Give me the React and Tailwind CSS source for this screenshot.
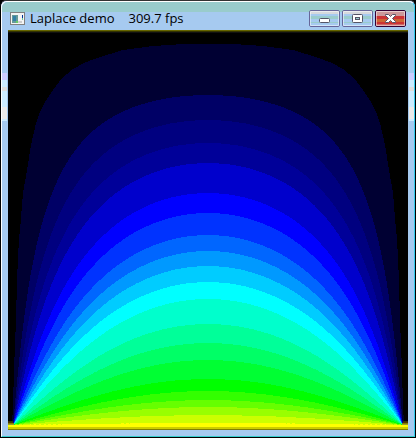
import React from "react";

// y at the middle column where each colour band begins
const bands = [
  { y: 65, color: "#000066" },
  { y: 90, color: "#000080" },
  { y: 113, color: "#000099" },
  { y: 133, color: "#0000cc" },
  { y: 163, color: "#0000ff" },
  { y: 183, color: "#0033ff" },
  { y: 205, color: "#0066ff" },
  { y: 221, color: "#0099ff" },
  { y: 236, color: "#00ccff" },
  { y: 252, color: "#00ffff" },
  { y: 269, color: "#00ffcc" },
  { y: 294, color: "#00ff99" },
  { y: 313, color: "#00ff66" },
  { y: 330, color: "#00ff33" },
  { y: 349, color: "#00ff00" },
  { y: 361, color: "#33ff00" },
  { y: 370, color: "#66ff00" },
  { y: 377, color: "#99ff00" },
  { y: 385, color: "#ccff00" },
  { y: 393, color: "#ffff00" },
];

const LEFT = 5;
const RIGHT = 395;
const BOTTOM = 395;
const WIDTH = RIGHT - LEFT;

// Closed form of the heated-bottom plate, all other edges held at zero
const potential = (x, y) => {
  const t = (x - LEFT) / WIDTH;
  const h = BOTTOM / WIDTH;
  const s = (BOTTOM - y) / WIDTH;
  let sum = 0;
  for (let n = 1; n < 160; n += 2) {
    const k = n * Math.PI;
    const decay = (Math.exp(-k * s) - Math.exp(-k * (2 * h - s))) / (1 - Math.exp(-2 * k * h));
    sum += (4 / k) * Math.sin(k * t) * decay;
  }
  return sum;
};

const contour = (startY) => {
  const level = potential(200, startY);
  let d = `M${LEFT} ${BOTTOM}`;
  for (let x = LEFT + 1; x < RIGHT; x += 1) {
    let low = 0;
    let high = BOTTOM;
    for (let i = 0; i < 12; i += 1) {
      const mid = (low + high) / 2;
      if (potential(x, mid) > level) high = mid;
      else low = mid;
    }
    d += `L${x} ${high.toFixed(1)}`;
  }
  return `${d}L${RIGHT} ${BOTTOM}Z`;
};

// The faintest band has not settled yet, so its left half is listed point by point
const outerEdge = [
  [4, 395], [5, 375], [6, 340], [8, 290], [9, 250], [11, 208], [12, 200], [15, 163], [19, 140], [23, 115],
  [28, 93], [32, 82], [37, 72], [45, 60], [54, 48], [59, 44], [65, 39], [76, 33], [89, 28], [102, 24],
  [115, 20], [130, 18], [145, 16], [160, 15], [175, 14], [200, 14],
];
const outerPoints = [...outerEdge, ...outerEdge.map(([x, y]) => [400 - x, y]).reverse()];

const shapes = bands.map((band) => ({ color: band.color, d: contour(band.y) }));

const Plot = () => (
  <svg viewBox="0 0 400 400" className="block w-full" shapeRendering="crispEdges" role="img" aria-label="Laplace demo">
    <rect width="400" height="400" fill="#000000" />
    <rect width="400" height="1" fill="#666600" />
    <rect y="1" width="400" height="1" fill="#333300" />
    <rect y="2" width="400" height="1" fill="#111111" />
    <polygon points={outerPoints.join(" ")} fill="#000033" />
    {shapes.map((shape) => (
      <path key={shape.color} d={shape.d} fill={shape.color} />
    ))}
    <rect y="391" width="5" height="1" fill="#333300" />
    <rect y="392" width="5" height="1" fill="#4d3300" />
    <rect y="393" width="6" height="1" fill="#808000" />
    <rect y="394" width="6" height="1" fill="#999933" />
    <rect x="395" y="391" width="5" height="1" fill="#333300" />
    <rect x="395" y="392" width="5" height="1" fill="#4d3300" />
    <rect x="394" y="393" width="6" height="1" fill="#808000" />
    <rect x="394" y="394" width="6" height="1" fill="#999933" />
    <rect y="395" width="400" height="2" fill="#ffff00" />
    <rect y="397" width="400" height="2" fill="#cccc00" />
    <rect y="399" width="400" height="1" fill="#808000" />
  </svg>
);

const FrameSide = () => (
  <div className="w-[5px] pt-[43px]">
    <div className="h-[7px] bg-[#ccccff]"></div>
    <div className="h-[7px] bg-[#ccecff]"></div>
    <div className="h-1 bg-[#dddddd]"></div>
    <div className="h-4 bg-[#ccecff]"></div>
    <div className="h-3 bg-[#eaeaea]"></div>
    <div className="h-0.5 bg-[#ccecff]"></div>
  </div>
);

const glass = "bg-[linear-gradient(#d6d9dc_3px,#a6caf0_3px_5px,#99cccc_5px_8px,#a6caf0_8px_11px,#99cccc_11px_12px,#a6caf0_12px)] border-[#666699]";
const red = "bg-[linear-gradient(#cc9999_5px,#cc3333_5px_8px,#cc6633_8px_11px,#cc3333_11px_13px,#cc6666_13px)] border-[#330033]";

const CaptionButton = ({ label, tone, children }) => (
  <button type="button" aria-label={label} className={`h-[17px] w-[31px] rounded-xs border ${tone}`}>
    <span className="flex h-full items-center justify-center border border-white/50">{children}</span>
  </button>
);

const App = () => {
  return (
    <div className="min-h-screen flex flex-col bg-black font-['Open_Sans','Noto_Sans',sans-serif]">
      <div className="flex flex-1 flex-col rounded-t-md border border-t-[#333333] border-black bg-[#a6caf0]">
        <div className="flex flex-1 flex-col rounded-t-md border border-t-white border-l-white border-r-[#33ccee] border-b-[#33cccc]">
          <header className="flex h-7 items-center bg-[linear-gradient(#99cccc_10px,#a6caf0_10px)] rounded-t-md pr-2 pl-2 pt-1">
            <svg width="15" height="13" viewBox="0 0 15 13" className="mr-[5px] shrink-0" shapeRendering="crispEdges" aria-hidden="true">
              <rect width="15" height="13" fill="#808080" />
              <rect x="1" y="1" width="13" height="11" fill="#f4f4f4" />
              <rect x="2" y="3" width="6" height="8" fill="#669999" />
              <rect x="3" y="4" width="3" height="5" fill="#3380a6" />
              <rect x="6" y="9" width="2" height="2" fill="#66cc66" />
              <rect x="8" y="9" width="4" height="2" fill="#cccccc" />
              <rect x="12" y="3" width="1" height="3" fill="#003399" />
              <rect x="12" y="6" width="1" height="2" fill="#66cc99" />
            </svg>
            <h1 className="flex flex-1 gap-3.5 text-[13px] leading-4 whitespace-nowrap text-black">
              <span>Laplace demo</span>
              <span>309.7 fps</span>
            </h1>
            <div className="flex gap-0.5">
              <CaptionButton label="Minimize" tone={glass}>
                <svg width="11" height="9" viewBox="0 0 11 9" aria-hidden="true">
                  <rect x="0.5" y="4.5" width="10" height="4" rx="1" fill="#ffffff" stroke="#555566" />
                </svg>
              </CaptionButton>
              <CaptionButton label="Maximize" tone={glass}>
                <svg width="11" height="9" viewBox="0 0 11 9" aria-hidden="true">
                  <rect x="0.5" y="0.5" width="10" height="8" rx="1" fill="#ffffff" stroke="#555566" />
                  <rect x="3.5" y="3.5" width="4" height="2" fill="#99cccc" stroke="#555566" />
                </svg>
              </CaptionButton>
              <CaptionButton label="Close" tone={red}>
                <svg width="11" height="9" viewBox="0 0 11 9" aria-hidden="true">
                  <path d="M.5.5h3l2 2 2-2h3v1l-3 3 3 3v1h-3l-2-2-2 2h-3v-1l3-3-3-3z" fill="#ffffff" stroke="#555566" />
                </svg>
              </CaptionButton>
            </div>
          </header>
          <main className="flex flex-1 pb-1.5">
            <FrameSide />
            <div className="ml-px min-w-0 flex-1">
              <Plot />
            </div>
            <div className="ml-px">
              <FrameSide />
            </div>
          </main>
        </div>
      </div>
    </div>
  );
};

export default App;
